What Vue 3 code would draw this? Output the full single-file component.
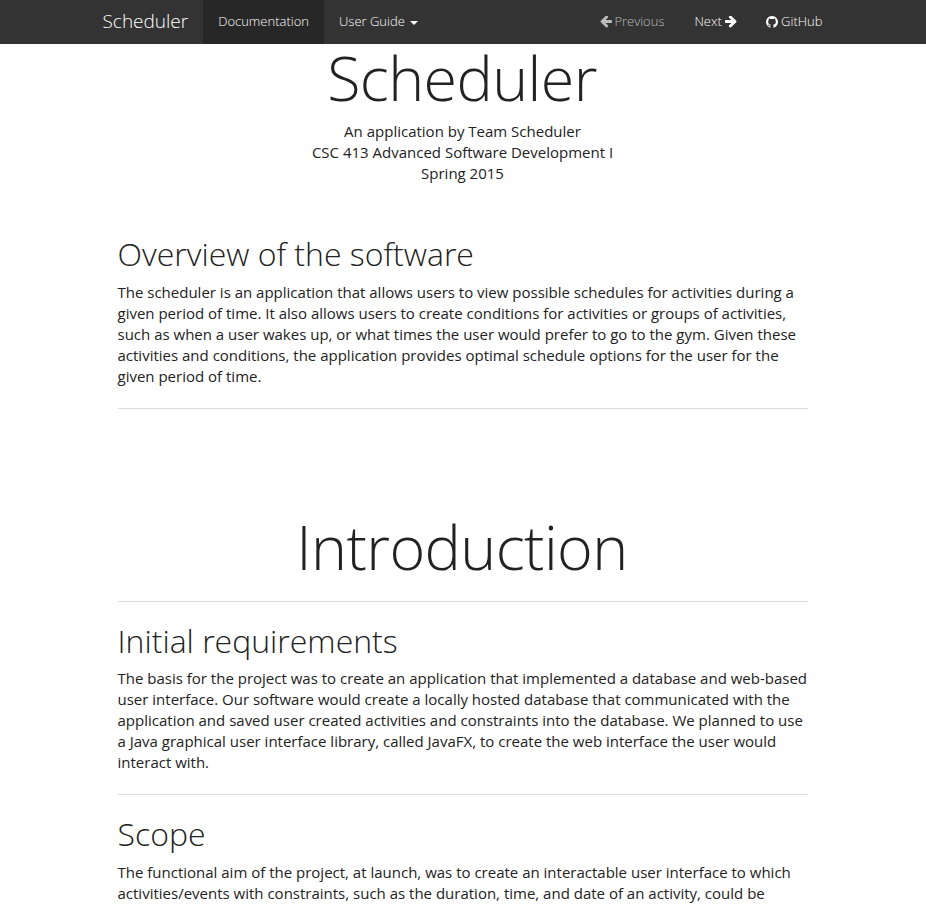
<script setup>
const overview = [
  'The scheduler is an application that allows users to view possible schedules for activities during a',
  'given period of time. It also allows users to create conditions for activities or groups of activities,',
  'such as when a user wakes up, or what times the user would prefer to go to the gym. Given these',
  'activities and conditions, the application provides optimal schedule options for the user for the',
  'given period of time.',
]
const requirements = [
  'The basis for the project was to create an application that implemented a database and web-based',
  'user interface. Our software would create a locally hosted database that communicated with the',
  'application and saved user created activities and constraints into the database. We planned to use',
  'a Java graphical user interface library, called JavaFX, to create the web interface the user would',
  'interact with.',
]
const scope = [
  'The functional aim of the project, at launch, was to create an interactable user interface to which',
  'activities/events with constraints, such as the duration, time, and date of an activity, could be',
]
</script>

<template>
  <div class="page">
    <nav class="navbar">
      <div class="nav-inner">
        <a class="brand">Scheduler</a>
        <a class="link active">Documentation</a>
        <a class="link">User Guide <span class="caret"></span></a>
        <div class="right">
          <a class="link muted"><svg class="arrow" viewBox="0 0 1664 1536"><path fill="currentColor" d="M1536 640v128q0 53-32.500 90.500t-84.500 37.500h-704l293 294q38 36 38 90t-38 90l-75 76q-37 37-90 37-52 0-91-37l-651-652q-37-37-37-90 0-52 37-91l651-650q38-38 91-38 52 0 90 38l75 74q38 38 38 91t-38 91l-293 293h704q52 0 84.500 37.500t32.500 90.500z" /></svg> Previous</a>
          <a class="link">Next <svg class="arrow next" viewBox="0 0 1664 1536"><path fill="currentColor" d="M1536 640v128q0 53-32.500 90.500t-84.500 37.500h-704l293 294q38 36 38 90t-38 90l-75 76q-37 37-90 37-52 0-91-37l-651-652q-37-37-37-90 0-52 37-91l651-650q38-38 91-38 52 0 90 38l75 74q38 38 38 91t-38 91l-293 293h704q52 0 84.500 37.500t32.500 90.500z" /></svg></a>
          <a class="link"><svg class="github" viewBox="0 0 1536 1536"><path fill="currentColor" d="M768 0q209 0 385.500 103t279.500 279.500 103 385.500q0 251-146.500 451.500t-378.500 277.500q-27 5-40-7t-13-30q0-3 .5-76.500t.5-134.500q0-97-52-142 57-6 102.500-18t94-39 81-66.500 53-105 20.500-150.500q0-119-79-206 37-91-8-204-28-9-81 11t-92 44l-38 24q-93-26-192-26t-192 26q-16-11-42.500-27t-83.500-38.500-85-13.500q-45 113-8 204-79 87-79 206 0 85 20.500 150t52.500 105 80.500 67 94 39 102.500 18q-39 36-49 103-21 10-45 15t-57 5-65.500-21.500-55.500-62.500q-19-32-48.500-52t-49.500-24l-20-3q-21 0-29 4.500t-5 11.500 9 14 13 12l7 5q22 10 43.500 38t31.500 51l10 23q13 38 44 61.500t67 30 69.500 7 55.500-3.500l23-4q0 38 .5 88.500t.5 54.500q0 18-13 30t-40 7q-232-77-378.500-277.500t-146.500-451.500q0-209 103-385.500t279.500-279.500 385.500-103z" /></svg> GitHub</a>
        </div>
      </div>
    </nav>
    <main class="content">
      <header class="title">
        <h1>Scheduler</h1>
        <p>An application by Team Scheduler<br>CSC 413 Advanced Software Development I<br>Spring 2015</p>
      </header>
      <section class="overview">
        <h2>Overview of the software</h2>
        <p><span v-for="line in overview" :key="line" class="line">{{ line }}</span></p>
      </section>
      <hr>
      <h1 class="intro">Introduction</h1>
      <hr>
      <section>
        <h2>Initial requirements</h2>
        <p><span v-for="line in requirements" :key="line" class="line">{{ line }}</span></p>
      </section>
      <hr>
      <section>
        <h2>Scope</h2>
        <p><span v-for="line in scope" :key="line" class="line">{{ line }}</span></p>
      </section>
    </main>
  </div>
</template>

<style>
body { background: #fff; }
</style>

<style scoped>
* { box-sizing: border-box; }
.page {
  height: 907px;
  overflow: hidden;
  font-family: "Open Sans", sans-serif;
  font-size: 15px;
  line-height: 21px;
  color: #222;
}
.navbar { height: 44px; padding-right: 1px; background: #333; color: #fff; }
.nav-inner { display: flex; width: 750px; margin: 0 auto; height: 44px; }
.brand { padding: 0 15px; font-size: 19px; font-weight: 300; line-height: 42px; }
.link { padding: 0 15px; font-size: 13px; font-weight: 300; line-height: 43px; white-space: nowrap; }
.active { background: #272727; }
.muted { color: #bbb; }
.right { display: flex; margin-left: auto; }
.caret {
  display: inline-block;
  margin-left: 2px;
  vertical-align: middle;
  border-top: 4px solid;
  border-right: 4px solid transparent;
  border-left: 4px solid transparent;
}
.arrow { width: 13px; height: 12px; vertical-align: -2px; margin-right: -1.5px; }
.next { transform: scaleX(-1); margin: 0 -1px 0 -1px; }
.github { width: 12px; height: 12px; vertical-align: -2px; margin-right: -0.5px; }
.content { width: 691px; margin: 0 auto; padding-right: 1px; }
h1, h2 { margin: 0; font-weight: 300; }
h1 { font-size: 61px; line-height: 67.1px; text-align: center; letter-spacing: -0.6px; }
h2 { font-size: 32px; line-height: 35px; margin-bottom: 10.5px; }
p { margin: 0; }
.title { text-align: center; height: 192.4px; }
.title h1 { line-height: 67px; margin-left: -1px; }
.title p { margin-top: 10px; }
.line { display: block; white-space: nowrap; }
hr { margin: 21px 0; border: 0; border-top: 1px solid #ddd; }
.intro { margin-top: 103.9px; margin-left: -1px; }
</style>
